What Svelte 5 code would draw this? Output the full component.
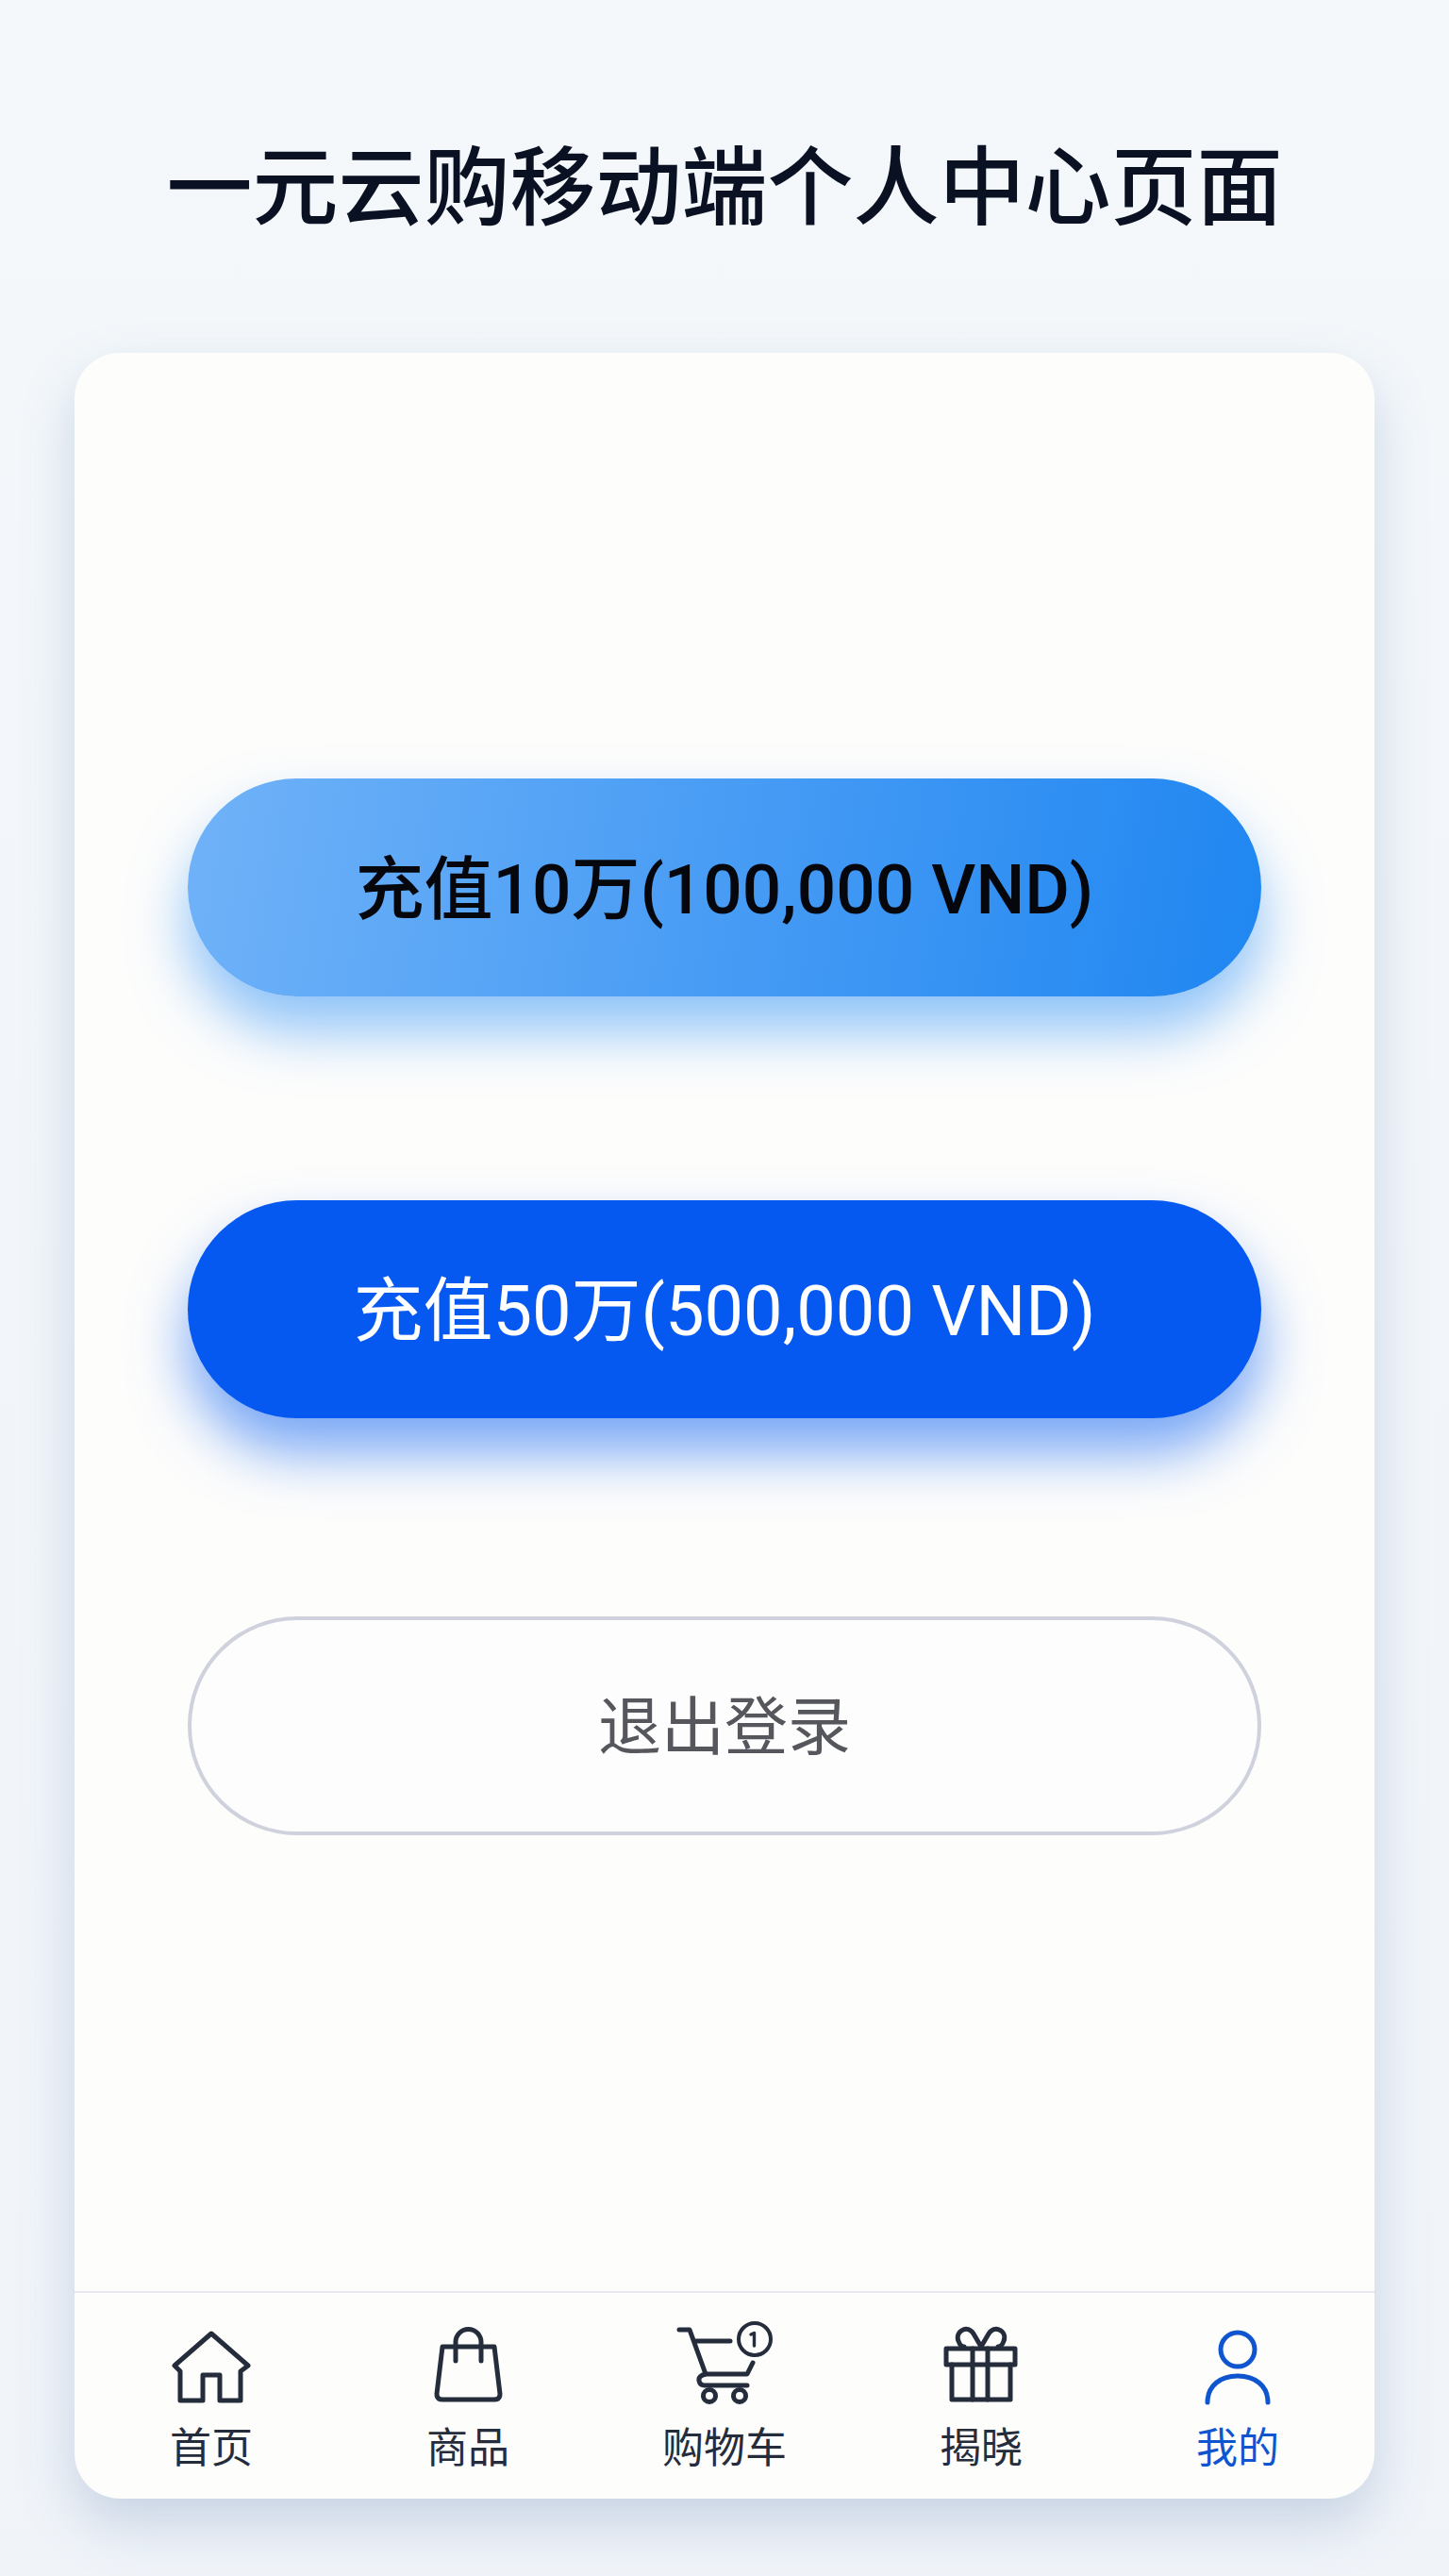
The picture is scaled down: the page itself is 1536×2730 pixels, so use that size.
<script>
    let tabs = [
        { id: 'home', label: '首页' },
        { id: 'goods', label: '商品' },
        { id: 'cart', label: '购物车' },
        { id: 'reveal', label: '揭晓' },
        { id: 'me', label: '我的', active: true }
    ];
</script>

<div class="page">
    <h1 class="title">一元云购移动端个人中心页面</h1>

    <div class="card">
        <div class="actions">
            <button class="btn light">充值10万(100,000 VND)</button>
            <button class="btn strong">充值50万(500,000 VND)</button>
            <button class="btn outline">退出登录</button>
        </div>

        <nav class="tabbar">
            {#each tabs as tab}
                <div class="tab" class:active={tab.active}>
                    <svg viewBox="0 0 96 96" width="96" height="96" fill="none" stroke="currentColor" stroke-width="5" stroke-linecap="round" stroke-linejoin="round">
                        {#if tab.id === 'home'}
                            <path d="M48 15 L87 49 L79 55 V86 H57 V59 H39 V86 H15 V55 L9 49 Z" />
                        {:else if tab.id === 'goods'}
                            <path d="M21 29 H76 L82 79 Q82 85 76 85 H21 Q15 85 15 79 Z" />
                            <path d="M35 44 V24 a13.5 13.5 0 0 1 27 0 V44" />
                        {:else if tab.id === 'cart'}
                            <path d="M0 11 H11 L28 58 H72 L78 46" />
                            <path d="M18 23 H54" />
                            <path d="M28 58 Q20 60 21 65 Q22 70 27 70 H72" />
                            <circle cx="32" cy="81" r="6.5" />
                            <circle cx="64" cy="81" r="6.5" />
                            <circle cx="80" cy="21" r="17" stroke-width="4" />
                            <path d="M76 16 L79.5 14.5 V28" stroke-width="3.4" />
                        {:else if tab.id === 'reveal'}
                            <path d="M11 31 H84 V48 H11 Z" />
                            <path d="M17 48 V85 H79 V48" />
                            <path d="M39 31 V85 M55 31 V85" />
                            <path d="M48 29 L41 17 C38 11 33 9 29 11 C24 13 22 18 24 23 C25 26 27 29 30 29" />
                            <path d="M48 29 L55 17 C58 11 63 9 67 11 C72 13 74 18 72 23 C71 26 69 29 66 29" />
                        {:else if tab.id === 'me'}
                            <circle cx="48" cy="32" r="18" />
                            <path d="M16 88 C16 70 30 60 48 60 C66 60 80 70 80 88" />
                        {/if}
                    </svg>
                    <span class="label">{tab.label}</span>
                </div>
            {/each}
        </nav>
    </div>
</div>

<style>
    :global(body) {
        margin: 0;
        background: #f3f7fb;
    }

    .page {
        height: 2730px;
        box-sizing: border-box;
        padding: 146px 79px 0;
        background: linear-gradient(180deg, #f4f8fb, #f0f4f9);
        font-family: Roboto, "Noto Sans CJK SC", sans-serif;
        overflow: hidden;
    }

    .title {
        margin: 0;
        height: 108px;
        line-height: 108px;
        font-size: 91px;
        font-weight: 500;
        text-align: center;
        color: #0a1122;
        white-space: nowrap;
    }

    .card {
        margin-top: 120px;
        height: 2274px;
        display: flex;
        flex-direction: column;
        background: #fdfdfc;
        border-radius: 48px;
        box-shadow: 0 26px 56px rgba(105, 135, 180, 0.3);
    }

    .actions {
        flex: 1;
        display: flex;
        flex-direction: column;
        padding: 451px 120px 0;
    }

    .btn {
        height: 231px;
        border-radius: 116px;
        border: none;
        font-family: inherit;
        font-size: 73px;
        font-weight: 500;
        padding: 0 0 10px;
        flex: none;
    }

    .light {
        background: linear-gradient(100deg, #70b2f8, #1f86f1);
        color: #05070c;
        box-shadow: 0 36px 60px rgba(50, 145, 245, 0.55);
    }

    .strong {
        margin-top: 216px;
        background: #0558f0;
        color: #fff;
        font-size: 74px;
        font-weight: 400;
        box-shadow: 0 36px 60px rgba(10, 95, 240, 0.55);
    }

    .outline {
        margin-top: 210px;
        height: 232px;
        background: #fdfdfd;
        border: 4px solid #cfd2dc;
        color: #55575c;
        font-size: 67px;
        font-weight: 400;
    }

    .tabbar {
        flex: none;
        height: 218px;
        display: grid;
        grid-template-columns: repeat(5, 272px);
        padding: 0 9px;
        border-top: 2px solid #e9e9f0;
    }

    .tab {
        display: flex;
        flex-direction: column;
        align-items: center;
        padding-top: 28px;
        color: #252c3b;
    }

    .tab svg {
        overflow: visible;
    }

    .tab.active {
        color: #0f55cf;
    }

    .label {
        margin-top: 13px;
        font-size: 44px;
        line-height: 56px;
    }
</style>
